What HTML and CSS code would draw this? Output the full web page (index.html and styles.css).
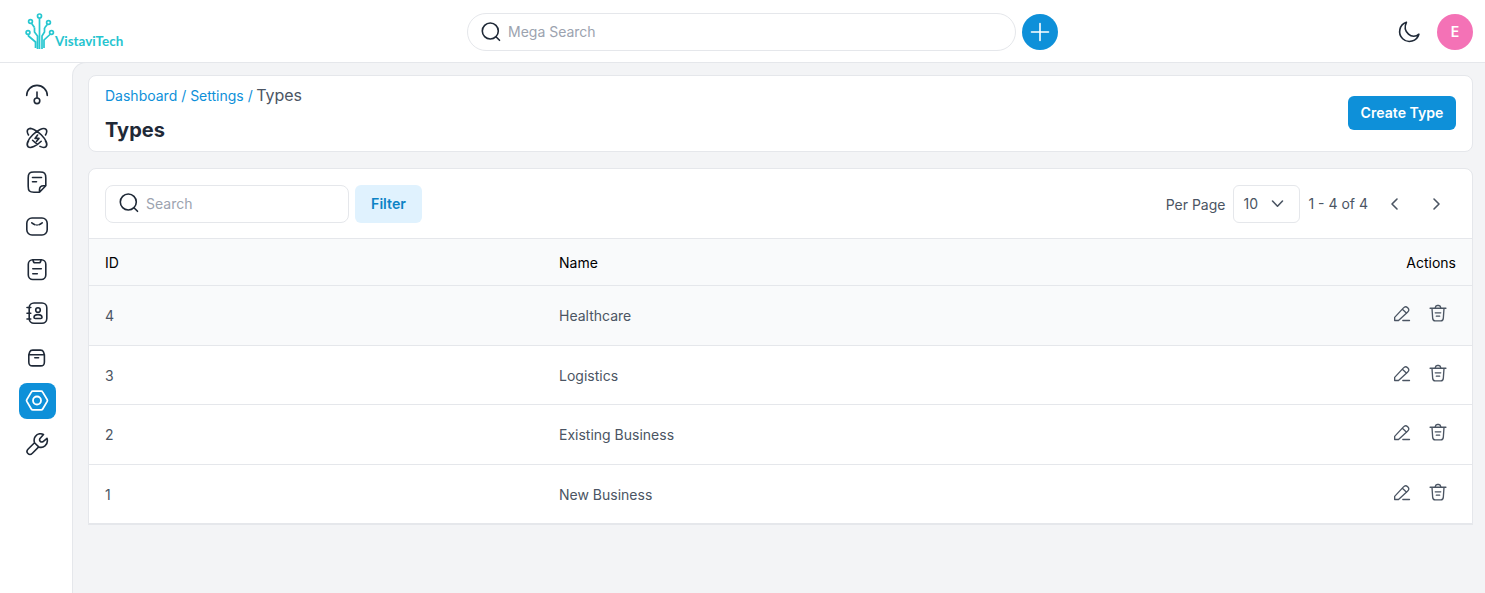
FILE: index.html
```html
<!DOCTYPE html>
<html lang="en">
<head>
<meta charset="utf-8">
<title>Types</title>
<link rel="stylesheet" href="styles.css">
</head>
<body>
<svg class="defs" width="0" height="0">
  <symbol id="search" viewBox="0 0 24 24"><circle cx="11.300" cy="11" r="8"/><path d="M17.200 17l3.300 3.300"/></symbol>
  <symbol id="pencil" viewBox="0 0 24 24"><path d="M3.200 17.200 13.500 6.200c1-1.100 1.800-1.700 2.800-1.700 1.500 0 3.900 2.200 3.900 3.900 0 .9-.5 1.600-1.600 2.600L7.800 21H3.200zM12.500 7.500l5 4.800M13 21h8" /></symbol>
  <symbol id="trash" viewBox="0 0 24 24"><path d="M2.500 6.300h19M4.800 6.500l.8 11.700c.2 2.700 1 3.300 3 3.300h6.800c2 0 2.800-.6 3-3.300l.8-11.700M8.500 6c.5-2.200 1-3 2.500-3h2c1.500 0 2 .8 2.500 3M8.700 11.800h6.600M10 15.800h4"/></symbol>
</svg>
<header class="topbar">
  <div class="logo">
    <svg class="logo-mark" width="30" height="38" viewBox="0 0 30 38">
      <path d="M14.500 5v31M9.500 14.500V19l3 4v13M3.500 21.500V23l7 6v6M19.500 15v4l-2.500 4v13M25.500 21l-6.500 6v8"/>
      <circle cx="14.500" cy="3" r="2"/><circle cx="5.500" cy="8.500" r="1.900"/><path d="M6.500 10.300l3 4.200"/><circle cx="3" cy="19.500" r="1.900"/><circle cx="23.500" cy="9.500" r="1.900"/><path d="M22.500 11.300l-3 3.700"/><circle cx="26.500" cy="19.500" r="1.900"/>
    </svg>
    <span class="logo-text">VistaviTech</span>
  </div>
  <div class="mega">
    <div class="mega-input"><svg class="icon" width="24" height="24"><use href="#search"/></svg><span>Mega Search</span></div>
    <div class="add"><svg class="icon" width="24" height="24" viewBox="0 0 24 24"><path d="M12 3.500v17M3.500 12h17"/></svg></div>
  </div>
  <div class="user">
    <svg class="icon" width="24" height="24" viewBox="0 0 24 24"><path d="M9.400 2.300A9.800 9.800 0 1 0 21.900 14.200C19 17 14.500 17 11.500 14.200 8.200 11 7.300 6.500 9.400 2.300z"/></svg>
    <div class="avatar">E</div>
  </div>
</header>
<div class="body">
  <nav class="sidebar">
    <div class="nav-item"><svg class="icon" width="24" height="24" viewBox="0 0 24 24"><path d="M1.700 13.400a10.300 10 0 0 1 20.600 0M12 10v5.500"/><circle cx="12" cy="18.800" r="2.800"/></svg></div>
    <div class="nav-item"><svg class="icon" width="24" height="24" viewBox="0 0 24 24"><path d="M3.500 9C2 6.500 2 4.500 3 3.400c2.500-2.400 8.600.7 13.200 5.300S23.200 18.300 21 20.600c-1.300 1.300-3.500 1-6-.2M12.300 18.200C10.500 17 9 15.700 7.600 14.300M20.500 9c1.500-2.500 1.500-4.500.5-5.600C18.500 1 12.400 4.100 7.800 8.700S.8 18.300 3 20.600c2.500 2.400 8.600-.7 13.200-5.300M9 3.600C6.500 2.300 4.300 2.100 3 3.400M3.500 15C2 17.500 2 19.500 3 20.600M20.500 15c1.500 2.500 1.500 4.500.5 5.600"/><path d="M12.600 9l-2.600 3.400h4L11.400 15.500"/></svg></div>
    <div class="nav-item"><svg class="icon" width="24" height="24" viewBox="0 0 24 24"><path d="M14.500 22.300H9c-4.500 0-5.800-1.300-5.800-6V8c0-4.700 1.300-6 5.800-6h6c4.500 0 5.800 1.300 5.800 6v7.800zM14.500 22.300v-2.500c0-3 1-4 4-4h2.300M7.500 7.500h9M7.500 11.700h4"/></svg></div>
    <div class="nav-item"><svg class="icon" width="24" height="24" viewBox="0 0 24 24"><rect x="1.800" y="4" width="20.400" height="17" rx="5.200"/><path d="M6.800 8.800c1.200 1 2.200 1.600 3.200 1.900M14 10.700c1-.3 2-.9 3.200-1.900M11.800 11h.4"/></svg></div>
    <div class="nav-item"><svg class="icon" width="24" height="24" viewBox="0 0 24 24"><rect x="3.300" y="1.700" width="17.500" height="19.800" rx="4.500"/><path d="M8 1.900c.2 2.400.8 2.900 2 2.900h4c1.200 0 1.800-.5 2-2.900M7.800 10.700h8.500M7.800 15.700h4.500"/></svg></div>
    <div class="nav-item"><svg class="icon" width="24" height="24" viewBox="0 0 24 24"><rect x="4.200" y="2" width="17.600" height="20.300" rx="4.800"/><circle cx="13" cy="9" r="2.300"/><path d="M9 16.500c0-1.800 1.600-2.900 4-2.900s4 1.100 4 2.900c0 .7-.5 1-1.300 1h-5.400c-.8 0-1.300-.3-1.300-1zM2 6.500h3.800M2 12.200h3.800M2 18h3.800"/></svg></div>
    <div class="nav-item"><svg class="icon" width="24" height="24" viewBox="0 0 24 24"><path d="M3.800 9.800V17c0 3 .9 3.900 3.900 3.900h7.800c3 0 3.900-.9 3.900-3.900V9.800zl1-3C5.300 5.500 6.200 5.100 7.700 5.100h7.800c1.500 0 2.400.4 2.900 1.700l1 3M9.800 12.800h3.800"/></svg></div>
    <div class="nav-item active"><svg class="icon" width="24" height="24" viewBox="0 0 24 24"><path d="M7.800 2.200h8.400q1 0 1.500.9l4.500 7.500q.5.900 0 1.800l-4.500 7.600q-.5.900-1.500.9H7.800q-1 0-1.500-.9l-4.500-7.600q-.5-.9 0-1.800l4.500-7.500q.5-.9 1.500-.9z"/><circle cx="12" cy="11.500" r="4"/></svg></div>
    <div class="nav-item"><svg class="icon" width="24" height="24" viewBox="0 0 24 24"><path d="M18.500 1.500c-3-1.200-6.500-.5-8.200 2-1.400 2-1.500 4-.8 6.200l-6.300 6.300c-1.700 1.700-1.700 3.100-.3 4.500s2.900 1.300 4.500-.3l6.300-6.300c2.200.8 4.500.5 6.300-1 2.200-1.900 2.800-4.800 2-7.600l-4.200 3.500c-2 .8-3.800-.9-3-3zM9.500 9.700l4.200 4.200"/></svg></div>
  </nav>
  <main class="main">
    <section class="card heading">
      <div>
        <div class="crumbs"><span>Dashboard / Settings /</span> <b>Types</b></div>
        <h1>Types</h1>
      </div>
      <div class="create">Create Type</div>
    </section>
    <section class="card listing">
      <div class="toolbar">
        <div class="search-input"><svg class="icon" width="24" height="24"><use href="#search"/></svg><span>Search</span></div>
        <div class="filter">Filter</div>
        <div class="pager">
          <span class="per">Per Page</span>
          <div class="select">10<svg class="icon" width="14" height="9" viewBox="0 0 14 9"><path d="M1.500 2 6.500 7.200l5-5.200"/></svg></div>
          <span class="range">1 - 4 of 4</span>
          <svg class="icon prev" width="9" height="14" viewBox="0 0 9 14"><path d="M7 2 2 7l5 5"/></svg>
          <svg class="icon next" width="9" height="14" viewBox="0 0 9 14"><path d="M2 2l5 5-5 5"/></svg>
        </div>
      </div>
      <div class="row head"><span>ID</span><span>Name</span><span class="end">Actions</span></div>
      <div class="row hover"><span>4</span><span>Healthcare</span><div class="actions"><svg class="icon" width="20" height="20"><use href="#pencil"/></svg><svg class="icon" width="20" height="20"><use href="#trash"/></svg></div></div>
      <div class="row"><span>3</span><span>Logistics</span><div class="actions"><svg class="icon" width="20" height="20"><use href="#pencil"/></svg><svg class="icon" width="20" height="20"><use href="#trash"/></svg></div></div>
      <div class="row"><span>2</span><span>Existing Business</span><div class="actions"><svg class="icon" width="20" height="20"><use href="#pencil"/></svg><svg class="icon" width="20" height="20"><use href="#trash"/></svg></div></div>
      <div class="row"><span>1</span><span>New Business</span><div class="actions"><svg class="icon" width="20" height="20"><use href="#pencil"/></svg><svg class="icon" width="20" height="20"><use href="#trash"/></svg></div></div>
    </section>
  </main>
</div>
</body>
</html>
```
FILE: styles.css
```css
* { box-sizing: border-box; }
body { margin: 0; height: 593px; overflow: hidden; background: #fff; color: #4b5563; font: 14px/20px Inter, sans-serif; }
.defs { display: block; }
.icon { display: block; flex: none; fill: none; stroke: currentColor; stroke-width: 1.6; stroke-linecap: round; stroke-linejoin: round; }
.topbar { display: grid; grid-template-columns: 467px 1fr auto; align-items: center; height: 63px; padding-right: 12px; border-bottom: 1px solid #e5e7eb; }
.logo { display: flex; align-items: flex-end; padding-left: 25px; height: 36px; }
.logo-mark { fill: none; stroke: #27c7d0; stroke-width: 1.7; margin-bottom: -2px; }
.logo-text { font: 700 13.4px/18px Lato, sans-serif; color: #27c4cf; margin-bottom: -1px; }
.mega { display: flex; align-items: center; gap: 6px; padding-top: 1px; }
.mega-input { display: flex; align-items: center; gap: 5px; width: 549px; height: 38px; padding-left: 11px; border: 1px solid #e5e7eb; border-radius: 19px; color: #9ca3af; }
.mega-input .icon, .search-input .icon { color: #1f2937; }
.add { display: grid; place-items: center; width: 36px; height: 36px; border-radius: 50%; background: #0e90d9; color: #fff; }
.user { display: flex; align-items: center; gap: 16px; color: #1f2937; padding-top: 1px; }
.avatar { width: 36px; height: 36px; border-radius: 50%; background: #f472b6; color: #fff; font-weight: 600; line-height: 36px; text-align: center; }
.body { display: flex; height: 530px; }
.sidebar { display: flex; flex-direction: column; gap: 7.8px; width: 72px; padding: 13.4px 0 0 19px; }
.nav-item { display: flex; align-items: center; padding-left: 6px; width: 37px; height: 36px; border-radius: 8px; color: #1f2937; }
.nav-item.active { background: #0e90d9; color: #fff; }
.nav-item.active .icon { stroke-width: 1.8; }
.main { flex: 1; margin-top: -1px; padding: 12px 12px 0 15px; background: #f3f4f6; border: solid #e5e7eb; border-width: 1px 0 0 1px; border-top-left-radius: 14px; }
.card { background: #fff; border: 1px solid #e5e7eb; border-radius: 8px; }
.heading { display: flex; justify-content: space-between; align-items: center; height: 77px; padding: 0 16px 2px; }
.crumbs { color: #0e90d9; margin-bottom: 12px; height: 24px; line-height: 22px; }
.crumbs b { font-weight: 400; font-size: 16px; color: #4b5563; margin-left: -0.5px; }
h1 { margin: 0; font-size: 20px; line-height: 20px; padding-bottom: 2px; font-weight: 700; color: #1f2937; }
.create { height: 34px; width: 108px; border-radius: 6px; background: #0e90d9; color: #fff; font-size: 14.1px; font-weight: 600; line-height: 34px; text-align: center; }
.listing { margin-top: 16px; height: 356px; border-radius: 8px 8px 0 0; box-shadow: 0 1px 0 #e5e7eb; }
.toolbar { display: flex; align-items: center; height: 69px; padding: 0 16px; }
.search-input { display: flex; align-items: center; gap: 5px; width: 244px; height: 38px; padding-left: 11px; border: 1px solid #e5e7eb; border-radius: 8px; color: #9ca3af; }
.search-input .icon { margin-top: -2px; }
.filter { width: 67px; height: 38px; margin-left: 6px; border-radius: 6px; background: #e0f2fe; color: #0c83c5; font-weight: 600; font-size: 14.2px; line-height: 38px; text-align: center; }
.pager { display: flex; align-items: center; margin-left: auto; padding-right: 15px; }
.per { padding-top: 2px; }
.select { display: flex; align-items: center; gap: 13px; width: 67px; height: 38px; margin: 0 8px; padding-left: 9px; border: 1px solid #e5e7eb; border-radius: 6px; }
.prev { margin-left: 22px; }
.next { margin-left: 33px; }
.row { display: grid; grid-template-columns: 454px 1fr auto; align-items: center; height: 59.5px; padding: 2px 16px 0; border-top: 1px solid #e5e7eb; }
.head { height: 47px; padding-top: 1px; color: #000; background: #f9fafb; }
.hover { background: #f9fafb; }
.actions { display: flex; gap: 16px; padding: 0 8px 6px 0; }
```
